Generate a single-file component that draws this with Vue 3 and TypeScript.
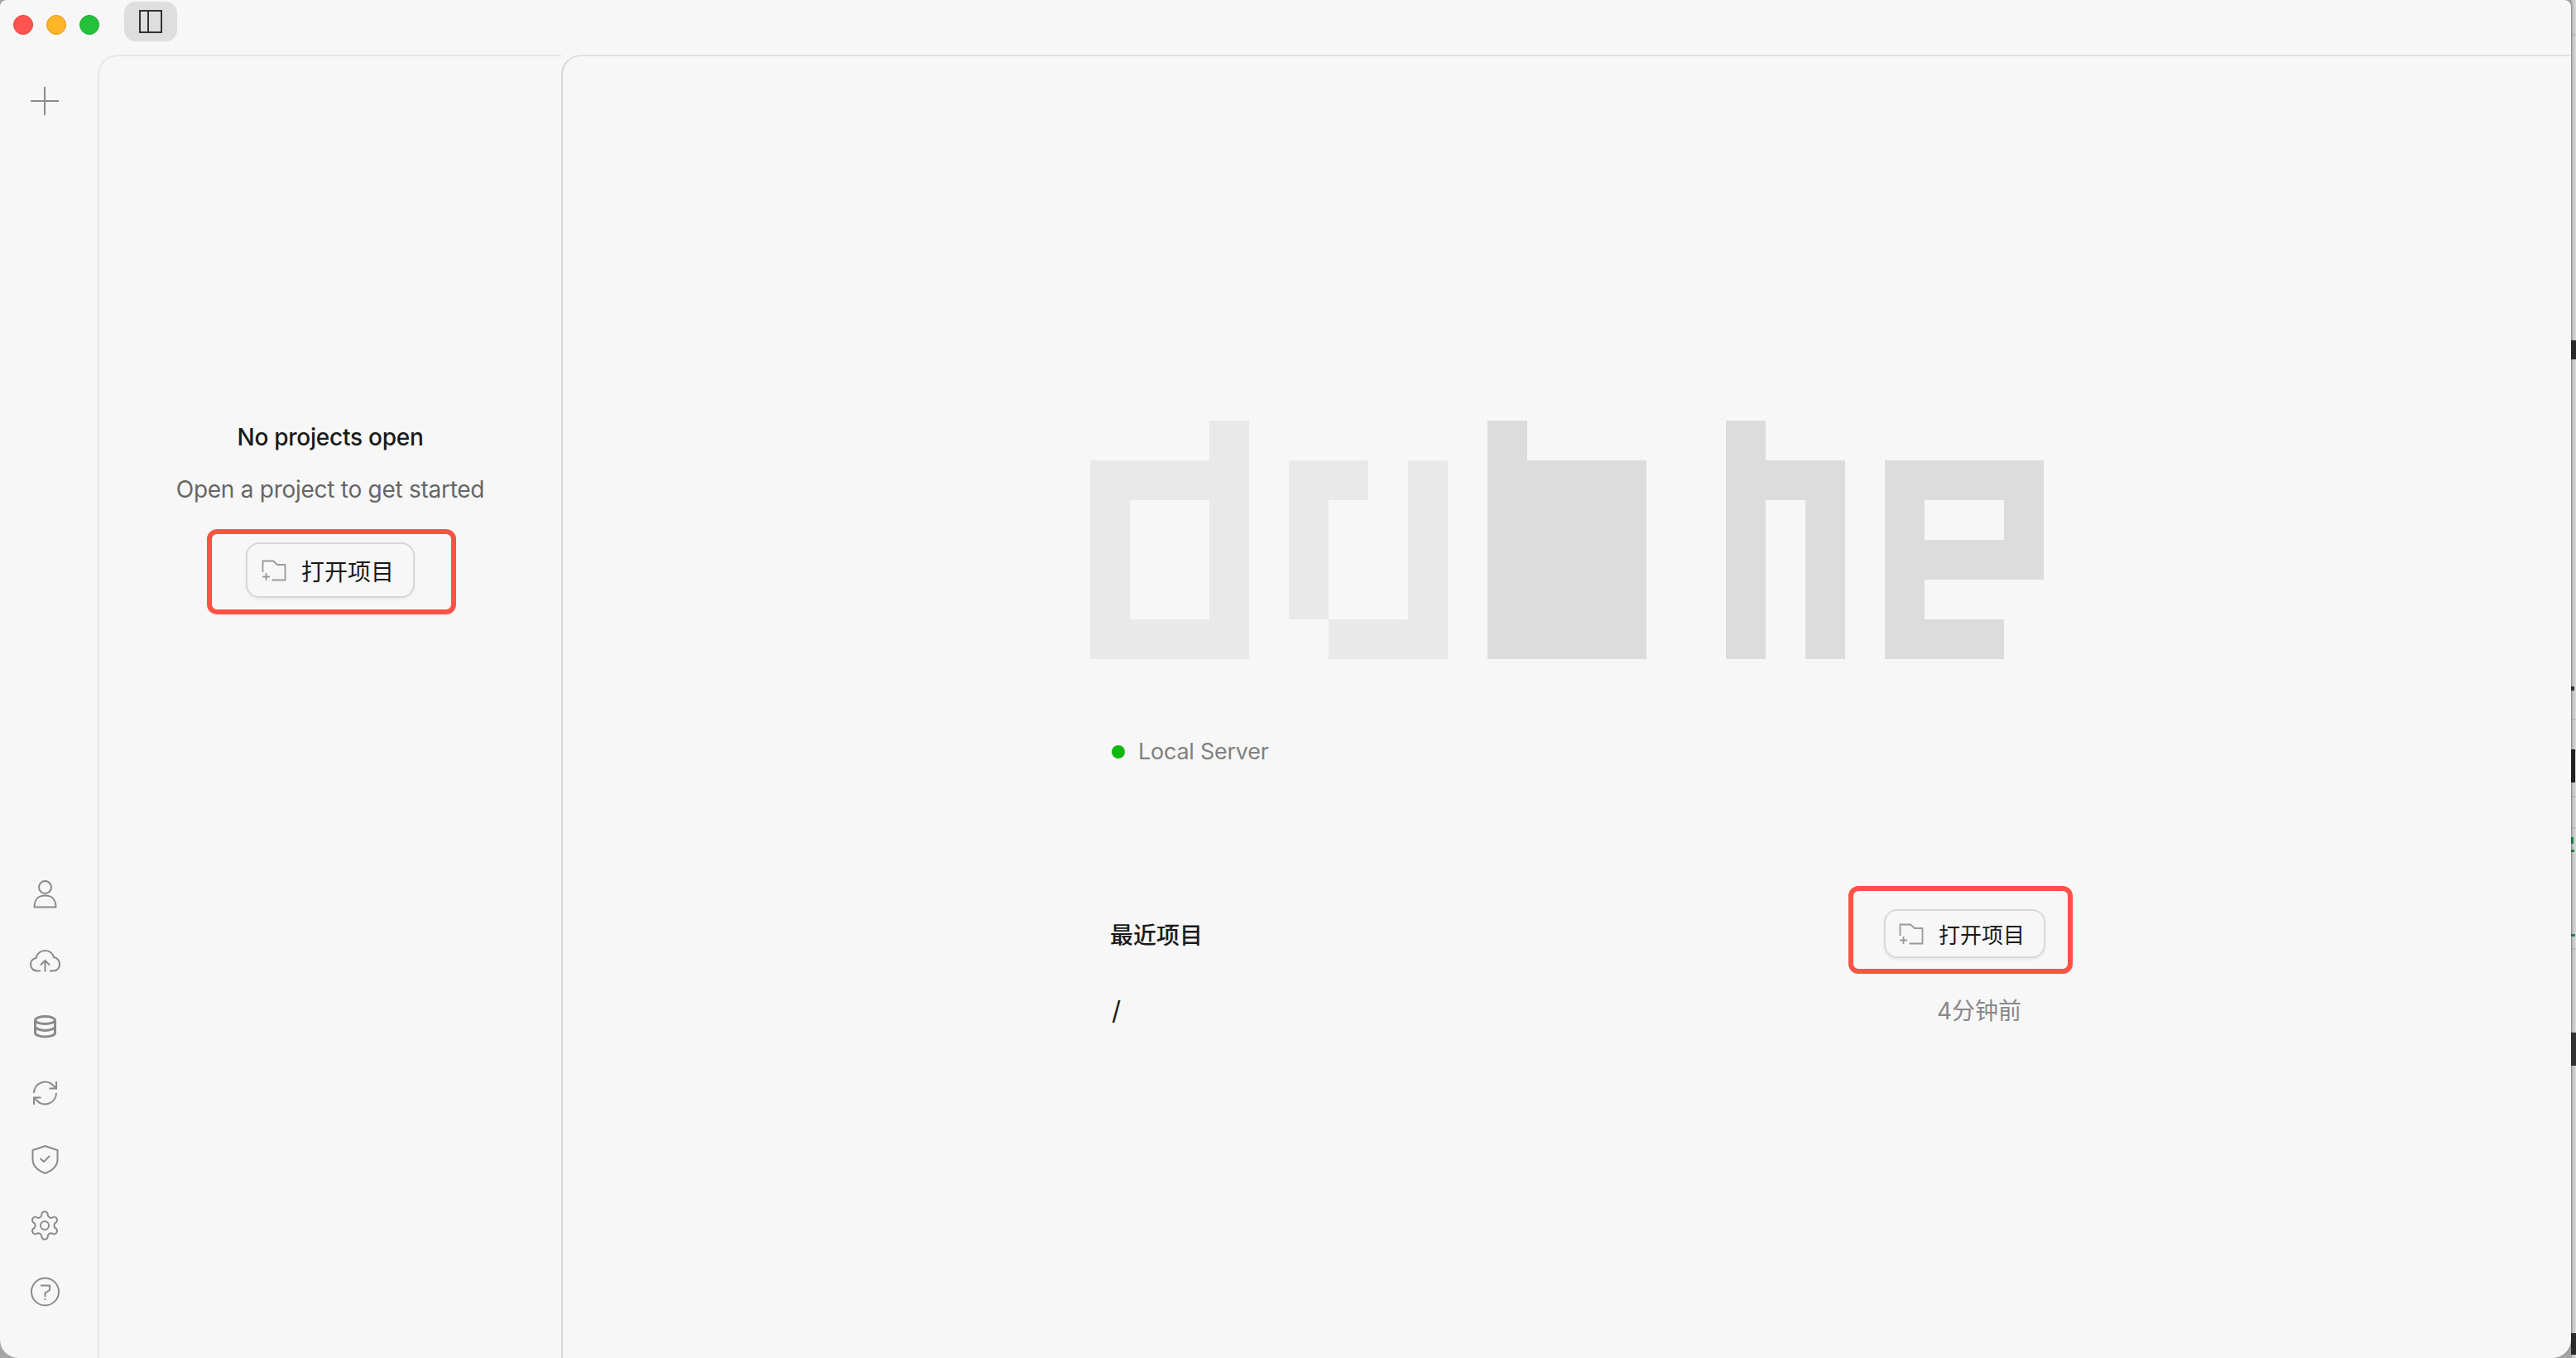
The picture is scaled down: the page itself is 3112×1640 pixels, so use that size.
<script setup lang="ts">
// pixel logo, one string per row: a = light cell, b = dark cell
const logoRows = [
  '...a......b.....b.......',
  'aaaa.aa.a.bbbb..bbb.bbbb',
  'a..a.a..a.bbbb..b.b.b..b',
  'a..a.a..a.bbbb..b.b.bbbb',
  'a..a.a..a.bbbb..b.b.b...',
  'aaaa..aaa.bbbb..b.b.bbb.'
]
const logoCells = logoRows.join('').split('')

// slivers of the window behind, visible at the right edge
const behind = [
  { top: 411, height: 23, width: 6, background: '#2a2a2a' },
  { top: 829, height: 5, width: 4, background: '#333' },
  { top: 905, height: 40, width: 5, background: '#222' },
  { top: 1011, height: 8, width: 3, background: '#1a8a4a' },
  { top: 1026, height: 3, width: 4, background: '#1a8a4a' },
  { top: 1128, height: 3, width: 5, background: '#1a8a4a' },
  { top: 1247, height: 40, width: 6, background: '#333' },
  { top: 1610, height: 26, width: 6, background: '#2a2a2a' }
]
const hairlines = [41, 868, 906, 961, 999, 1145]
</script>

<template>
  <div class="desktop">
    <div v-for="y in hairlines" :key="y" class="hairline" :style="{ top: y + 'px' }"></div>
    <div
      v-for="b in behind"
      :key="b.top"
      class="sliver"
      :style="{ top: b.top + 'px', height: b.height + 'px', width: b.width + 'px', background: b.background }"
    ></div>

    <div class="window">
      <header class="titlebar">
        <span class="light red"></span>
        <span class="light yellow"></span>
        <span class="light green"></span>
        <button class="toggle"><span class="toggle-icon"></span></button>
      </header>

      <div class="body">
        <nav class="rail">
          <div class="rail-item">
            <svg class="icon" viewBox="0 0 40 40"><path d="M20 3v34M3 20h34" /></svg>
          </div>
          <div class="rail-bottom">
            <div class="rail-item">
              <svg class="icon" viewBox="0 0 40 40">
                <circle cx="20.5" cy="11.5" r="7.5" />
                <path d="M7.5 35.5H33.5C33.5 26 28 21.5 20.5 21.5S7.5 26 7.5 35.5Z" />
              </svg>
            </div>
            <div class="rail-item">
              <svg class="icon" viewBox="0 0 40 40">
                <path d="M15 32.500H11C5.500 32.500 3 28.500 3 24.500C3 20.500 6 17.500 9.500 17C10.500 11.500 15 8 20.500 8C26 8 30 11.500 31 16C35 16.500 38 20 38 24.500C38 29 35 32.500 30 32.500H26" />
                <path d="M20.500 33.500V20M15 25.500L20.500 20L26 25.500" />
              </svg>
            </div>
            <div class="rail-item">
              <svg class="icon thick" viewBox="0 0 40 40">
                <ellipse cx="20.500" cy="12" rx="12" ry="4.500" />
                <path d="M8.500 12V27.500C8.500 30 14 32 20.500 32S32.500 30 32.500 27.500V12" />
                <path d="M8.500 19.500C8.500 22 14 24.500 20.500 24.500S32.500 22 32.500 19.500" />
              </svg>
            </div>
            <div class="rail-item">
              <svg class="icon" viewBox="0 0 40 40">
                <path d="M7 20a13.500 13.500 0 0 1 23.500-9l3.500 3.500M34 6v8.500H25.500" />
                <path d="M34 20a13.500 13.500 0 0 1-23.500 9L7 25.500M7 34v-8.500H15.500" />
              </svg>
            </div>
            <div class="rail-item">
              <svg class="icon" viewBox="0 0 40 40">
                <path d="M20.500 4L35.500 9V20C35.500 28 29.500 33.500 20.500 37C11.500 33.500 5.500 28 5.500 20V9Z" />
                <path d="M14.500 19l4.500 4 7-7" />
              </svg>
            </div>
            <div class="rail-item">
              <svg class="icon gear" viewBox="0 0 24 24">
                <path d="M12.220 2h-.44a2 2 0 0 0-2 2v.18a2 2 0 0 1-1 1.730l-.43.25a2 2 0 0 1-2 0l-.15-.08a2 2 0 0 0-2.730.73l-.22.38a2 2 0 0 0 .73 2.730l.15.1a2 2 0 0 1 1 1.720v.51a2 2 0 0 1-1 1.740l-.15.09a2 2 0 0 0-.73 2.730l.22.38a2 2 0 0 0 2.730.73l.15-.08a2 2 0 0 1 2 0l.43.25a2 2 0 0 1 1 1.730V20a2 2 0 0 0 2 2h.44a2 2 0 0 0 2-2v-.18a2 2 0 0 1 1-1.730l.43-.25a2 2 0 0 1 2 0l.15.08a2 2 0 0 0 2.730-.73l.22-.39a2 2 0 0 0-.73-2.730l-.15-.08a2 2 0 0 1-1-1.740v-.5a2 2 0 0 1 1-1.740l.15-.09a2 2 0 0 0 .73-2.730l-.22-.38a2 2 0 0 0-2.730-.73l-.15.08a2 2 0 0 1-2 0l-.43-.25a2 2 0 0 1-1-1.730V4a2 2 0 0 0-2-2z" />
                <circle cx="12" cy="12" r="3" />
              </svg>
            </div>
            <div class="rail-item">
              <svg class="icon" viewBox="0 0 40 40">
                <circle cx="20.500" cy="20" r="16.500" />
                <path d="M15 12.500H26V18L20.500 21.500V26M20.500 28V30" />
              </svg>
            </div>
          </div>
        </nav>

        <aside class="side-panel">
          <h2 class="side-title">No projects open</h2>
          <p class="side-sub">Open a project to get started</p>
          <div class="btn-wrap">
            <button class="open-btn">
              <svg class="folder" viewBox="0 0 30 26">
                <path d="M1.500 15V1.500H14L19 6H28.500V24.500H12.500" />
                <path d="M1 20.500H10M5.500 16V25" />
              </svg>
              打开项目
            </button>
            <span class="mark mark-side"></span>
          </div>
        </aside>

        <main class="main-panel">
          <div class="logo" role="img" aria-label="dubhe">
            <i
              v-for="(c, i) in logoCells"
              :key="i"
              :class="{ 'cell-a': c === 'a', 'cell-b': c === 'b' }"
            ></i>
          </div>

          <div class="status">
            <span class="dot"></span>
            Local Server
          </div>

          <div class="recent-head">
            <span class="recent-title">最近项目</span>
            <div class="btn-wrap">
              <button class="open-btn small">
                <svg class="folder" viewBox="0 0 30 26">
                  <path d="M1.500 15V1.500H14L19 6H28.500V24.500H12.500" />
                  <path d="M1 20.500H10M5.500 16V25" />
                </svg>
                打开项目
              </button>
              <span class="mark mark-main"></span>
            </div>
          </div>

          <div class="recent-row">
            <span class="path">/</span>
            <span class="when">4分钟前</span>
          </div>
        </main>
      </div>
    </div>
  </div>
</template>

<style>
html,
body {
  margin: 0;
  background: #c9c9c9;
}
</style>

<style scoped>
.desktop {
  position: relative;
  width: 3112px;
  height: 1640px;
  overflow: hidden;
  background: linear-gradient(to right, #a6a6a6 3106px, #c4c4c4 3108px, #dadada 3112px);
  font-family: Inter, "Noto Sans CJK SC", sans-serif;
}

.hairline {
  position: absolute;
  right: 0;
  width: 6px;
  height: 2px;
  background: rgba(0, 0, 0, 0.08);
}

.sliver {
  position: absolute;
  left: 3106px;
}

.window {
  position: relative;
  width: 3106px;
  height: 1640px;
  display: flex;
  flex-direction: column;
  background: #f7f7f7;
  border-radius: 8px 8px 22px 22px;
  box-shadow: 1px 0 2px rgba(0, 0, 0, 0.2);
}

.titlebar {
  height: 66px;
  flex-shrink: 0;
  display: flex;
  align-items: flex-start;
  gap: 16px;
  padding-left: 16px;
}

.light {
  width: 24px;
  height: 24px;
  margin-top: 18px;
  border-radius: 50%;
  box-sizing: border-box;
  border: 1px solid;
}

.red {
  background: #ff5450;
  border-color: #e6443f;
}

.yellow {
  background: #ffb42a;
  border-color: #e09a1f;
}

.green {
  background: #24c23a;
  border-color: #1ea932;
}

.toggle {
  width: 64px;
  height: 48px;
  margin: 2px 0 0 14px;
  padding: 0;
  border: none;
  border-radius: 14px;
  background: #dedede;
  display: flex;
  align-items: center;
  justify-content: center;
}

.toggle-icon {
  position: relative;
  width: 28px;
  height: 28px;
  box-sizing: border-box;
  border: 2px solid #333;
}

.toggle-icon::before {
  content: "";
  position: absolute;
  left: 8px;
  top: 0;
  bottom: 0;
  width: 2px;
  background: #333;
}

.body {
  flex: 1;
  display: flex;
  min-height: 0;
}

.rail {
  width: 118px;
  flex-shrink: 0;
  display: flex;
  flex-direction: column;
  justify-content: space-between;
  padding: 16px 0 40px;
  box-sizing: border-box;
}

.rail-item {
  height: 80px;
  display: flex;
  align-items: center;
  padding-left: 34px;
}

.icon {
  width: 40px;
  height: 40px;
  fill: none;
  stroke: #8a8a8a;
  stroke-width: 2;
}

.icon.thick {
  stroke-width: 3;
}

.icon.gear {
  stroke-width: 1.2;
}

.side-panel {
  width: 560px;
  flex-shrink: 0;
  box-sizing: border-box;
  border-left: 2px solid #e6e6e6;
  border-top: 2px solid #e6e6e6;
  border-top-left-radius: 24px;
  padding-top: 440px;
  display: flex;
  flex-direction: column;
  align-items: center;
}

.side-title {
  margin: 0;
  font-size: 28px;
  line-height: 40px;
  font-weight: 500;
  letter-spacing: -0.25px;
  color: #1a1a1a;
}

.side-sub {
  margin: 23px 0 44px;
  font-size: 28px;
  line-height: 40px;
  font-weight: 400;
  letter-spacing: -0.27px;
  color: #666;
}

.btn-wrap {
  position: relative;
}

.open-btn {
  display: flex;
  align-items: center;
  gap: 18px;
  height: 67px;
  padding: 0 23px 0 17px;
  background: #f7f7f7;
  border: 2px solid #d8d8d8;
  border-radius: 16px;
  box-shadow: 0 2px 4px rgba(0, 0, 0, 0.06);
  font-family: inherit;
  font-size: 28px;
  font-weight: 400;
  color: #1a1a1a;
}

.open-btn.small {
  height: 59px;
  padding: 0 23px 0 16px;
  font-size: 26px;
}

.folder {
  width: 30px;
  height: 26px;
  fill: none;
  stroke: #999;
  stroke-width: 1.8;
}

.mark {
  position: absolute;
  border: 6px solid #ff5247;
  border-radius: 12px;
  pointer-events: none;
}

.mark-side {
  inset: -16px -50px -20px -47px;
}

.mark-main {
  inset: -28px -33px -19px -43px;
}

.main-panel {
  flex: 1;
  min-width: 0;
  box-sizing: border-box;
  border-left: 2px solid #d8d8d8;
  border-top: 2px solid #e0e0e0;
  border-top-left-radius: 24px;
  padding-top: 440px;
  display: flex;
  flex-direction: column;
  align-items: center;
}

.logo {
  display: grid;
  grid-template-columns: repeat(24, 48px);
  grid-auto-rows: 48px;
}

.cell-a {
  background: #e9e9e9;
}

.cell-b {
  background: #dcdcdc;
}

.status {
  width: 1128px;
  margin: 92px 0 0 28px;
  display: flex;
  align-items: center;
  gap: 16px;
  font-size: 27px;
  letter-spacing: -0.25px;
  line-height: 40px;
  color: #808080;
}

.dot {
  width: 16px;
  height: 16px;
  border-radius: 50%;
  background: #0bb80b;
}

.recent-head {
  width: 1128px;
  margin: 170px 0 0 28px;
  display: flex;
  align-items: center;
  justify-content: space-between;
}

.recent-title {
  margin-left: -2px;
  font-size: 28px;
  font-weight: 500;
  color: #1a1a1a;
}

.recent-row {
  width: 1128px;
  margin: 44px 0 0 28px;
  display: flex;
  justify-content: space-between;
  line-height: 40px;
  font-size: 28px;
}

.path {
  color: #1a1a1a;
  font-size: 31px;
}

.when {
  padding-right: 29px;
  color: #888;
}
</style>
